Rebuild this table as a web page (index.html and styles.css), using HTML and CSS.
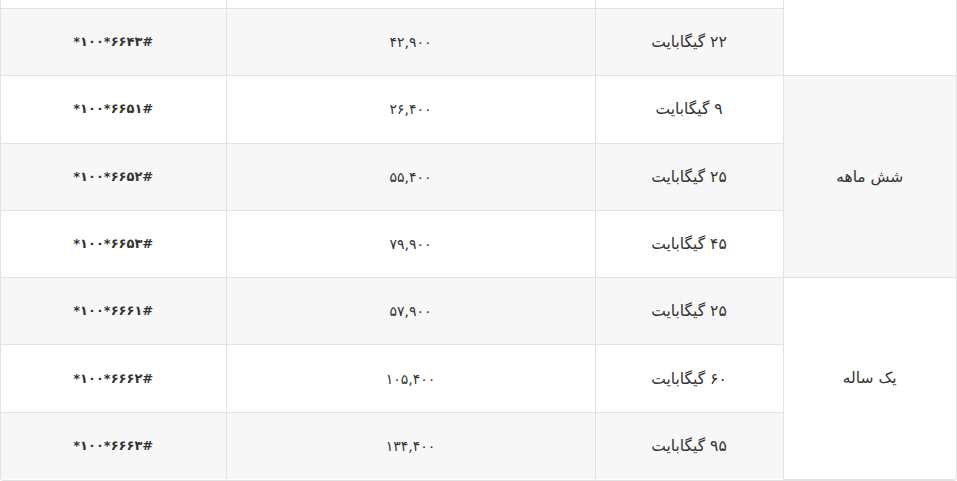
FILE: index.html
```html
<!DOCTYPE html>
<html lang="fa" dir="rtl">
<head>
<meta charset="utf-8">
<title>بسته‌های اینترنت</title>
<link rel="stylesheet" href="styles.css">
</head>
<body>
<div class="table-wrap">
<table class="plans">
<colgroup>
<col class="c-period">
<col class="c-volume">
<col class="c-price">
<col class="c-code">
</colgroup>
<tbody>
<tr class="row-top">
<td class="period white" rowspan="2"></td>
<td class="white"></td>
<td class="white"></td>
<td class="white"></td>
</tr>
<tr class="row gray">
<td class="volume">۲۲ گیگابایت</td>
<td class="price">۴۲,۹۰۰</td>
<td class="code"><span dir="ltr">*۱۰۰*۶۶۴۳#</span></td>
</tr>
<tr class="row white">
<td class="period gray" rowspan="3">شش ماهه</td>
<td class="volume">۹ گیگابایت</td>
<td class="price">۲۶,۴۰۰</td>
<td class="code"><span dir="ltr">*۱۰۰*۶۶۵۱#</span></td>
</tr>
<tr class="row gray">
<td class="volume">۲۵ گیگابایت</td>
<td class="price">۵۵,۴۰۰</td>
<td class="code"><span dir="ltr">*۱۰۰*۶۶۵۲#</span></td>
</tr>
<tr class="row white">
<td class="volume">۴۵ گیگابایت</td>
<td class="price">۷۹,۹۰۰</td>
<td class="code"><span dir="ltr">*۱۰۰*۶۶۵۳#</span></td>
</tr>
<tr class="row gray">
<td class="period white" rowspan="3">یک ساله</td>
<td class="volume">۲۵ گیگابایت</td>
<td class="price">۵۷,۹۰۰</td>
<td class="code"><span dir="ltr">*۱۰۰*۶۶۶۱#</span></td>
</tr>
<tr class="row white">
<td class="volume">۶۰ گیگابایت</td>
<td class="price">۱۰۵,۴۰۰</td>
<td class="code"><span dir="ltr">*۱۰۰*۶۶۶۲#</span></td>
</tr>
<tr class="row gray">
<td class="volume">۹۵ گیگابایت</td>
<td class="price">۱۳۴,۴۰۰</td>
<td class="code"><span dir="ltr">*۱۰۰*۶۶۶۳#</span></td>
</tr>
</tbody>
</table>
</div>
</body>
</html>
```
FILE: styles.css
```css
html, body {
  margin: 0;
  padding: 0;
  background: #ffffff;
}

body {
  font-family: "DejaVu Sans", "Noto Sans", sans-serif;
  font-size: 14px;
  color: #333333;
}

.table-wrap {
  width: 957px;
  box-sizing: border-box;
  border: 1px solid #e2e2e2;
  border-top: none;
  border-radius: 0 0 4px 4px;
  overflow: hidden;
}

.plans {
  width: 100%;
  border-collapse: collapse;
  table-layout: fixed;
}

.c-period { width: 173px; }
.c-volume { width: 188px; }
.c-price { width: 369px; }
.c-code { width: auto; }

.plans td {
  border: 1px solid #e2e2e2;
  text-align: center;
  vertical-align: middle;
  padding: 0 8px;
  line-height: 20px;
}

.plans tr:last-child td { border-bottom: none; }
.plans td:last-child { border-left: none; }
.plans tr td.period { border-right: none; }
.plans tr.row-top td { border-top: none; height: 8px; padding: 0; }

.plans tr.row td { height: 66.3px; }

.gray, .plans tr.gray td { background: #f7f7f7; }
.white, .plans tr.white td { background: #ffffff; }
.plans td.period.gray { background: #f7f7f7; }
.plans td.period.white { background: #ffffff; }

.plans td.period,
.plans td.volume {
  font-size: 15.5px;
}

.plans td.price {
  font-size: 14px;
}

.plans td.code {
  font-size: 13px;
  font-weight: bold;
}
```
